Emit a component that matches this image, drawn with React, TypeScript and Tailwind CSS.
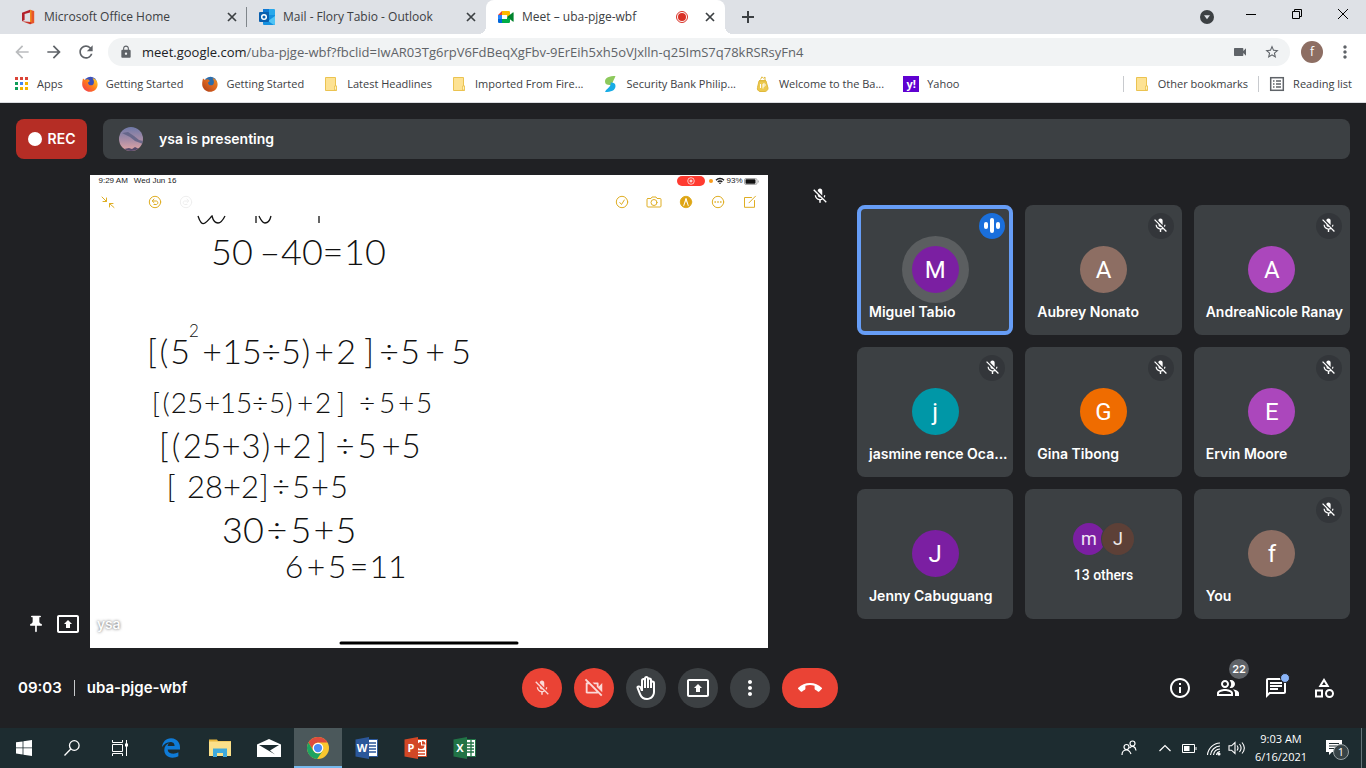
import type { ReactNode } from "react";
import {
  MdArrowBack,
  MdArrowForward,
  MdCallEnd,
  MdInfoOutline,
  MdLock,
  MdMicOff,
  MdMoreVert,
  MdOutlineBackHand,
  MdOutlineCategory,
  MdOutlineChat,
  MdOutlinePeopleAlt,
  MdOutlinePresentToAll,
  MdOutlineVideocamOff,
  MdPushPin,
  MdRefresh,
  MdStarBorder,
  MdVideocam,
} from "react-icons/md";
import { FaEdgeLegacy } from "react-icons/fa";

/* ---------- Brand icons ---------- */

function OfficeIcon() {
  return (
    <svg viewBox="0 0 16 16" className="size-4">
      <path d="M10 .8 2 3.800v8.400l2.600-1.100V5L10 3.600z" fill="#b3202a" />
      <path d="M10 .8 14.200 2v12L10 15.200z" fill="#e8562a" />
      <path d="M2 12.200 10 15.200l1.200-.4V13z" fill="#c9352b" />
      <path d="M10 .8V13l1.500.200V1.200z" fill="#f08a1d" />
    </svg>
  );
}

function OutlookIcon() {
  return (
    <svg viewBox="0 0 16 16" className="size-4">
      <path d="M4 0h11a1 1 0 0 1 1 1v6H4z" fill="#28a8ea" />
      <path d="M4 0h6v4H4z" fill="#0f78d4" />
      <path d="M4 6h12v9a1 1 0 0 1-1 1H5a1 1 0 0 1-1-1z" fill="#1490df" />
      <path d="m16 7-7 5 6 4a1 1 0 0 0 1-1z" fill="#50c4f5" />
      <rect y="3" width="10" height="10" rx="1" fill="#0a5fae" />
      <circle cx="5" cy="8" r="2.300" fill="none" stroke="#fff" strokeWidth="1.500" />
    </svg>
  );
}

function MeetIcon() {
  return (
    <svg viewBox="0 0 16 16" className="size-4">
      <path d="M0 6h4v4H0z" fill="#2684fc" />
      <path d="M0 10h4v4H1.200A1.200 1.200 0 0 1 0 12.800z" fill="#0066da" />
      <path d="m0 6 4-4v4z" fill="#e94235" />
      <path d="M4 2h6.800A1.200 1.200 0 0 1 12 3.200V7l-3 1V6H4z" fill="#ffba00" />
      <path d="M4 10h5V8l3 2v2.800a1.200 1.200 0 0 1-1.200 1.200H4z" fill="#00ac47" />
      <path d="m9 8 5.800-4.600c.4-.3.8-.1.800.4v8.400c0 .5-.4.700-.8.400z" fill="#00832d" />
      <path d="M4 6h5v4H4z" fill="#fff" />
    </svg>
  );
}

function FirefoxIcon({ dark }: { dark?: boolean }) {
  const id = dark ? "fox-dark" : "fox";
  return (
    <svg viewBox="0 0 16 16" className="size-4">
      <defs>
        <linearGradient id={id} x1="1" y1="0" x2="0" y2="1">
          <stop offset="0" stopColor={dark ? "#e8902a" : "#ffe226"} />
          <stop offset=".5" stopColor={dark ? "#d9631e" : "#ff7a1a"} />
          <stop offset="1" stopColor={dark ? "#a83a16" : "#f0315a"} />
        </linearGradient>
      </defs>
      <circle cx="8.500" cy="7" r="6.300" fill={dark ? "#2b6cab" : "#3b4fb8"} />
      <path
        d="M1 2.500 3 4c1-.8 2-1 3-.8L8 5 6 6.500c.2 2 1.400 3 3 2.800 1.500.2 2.400-.6 2.600-1.500 1-2-.2-4-1-5.800C13.500 3 16 5.500 15.600 9c-.4 4-3.600 6.800-7.600 6.800S.3 12.500.2 8.500C.1 6 .7 4 1 2.500z"
        fill={`url(#${id})`}
      />
    </svg>
  );
}

function FolderIcon() {
  return (
    <svg viewBox="0 0 16 16" className="size-4">
      <path d="M2.500 1.500h10v8.500h1v4.500h-11z" fill="#fde293" stroke="#ebc351" />
      <path d="M11.500 14v-4h2v4z" fill="#fff0bd" stroke="#ebc351" strokeWidth=".8" />
    </svg>
  );
}

function BankIcon() {
  return (
    <svg viewBox="0 0 16 16" className="size-4">
      <path d="M13.500 0C7.500 0 3 1.500 3 5.500c0 3 2.500 3.700 5.500 3.500 1.200-.1 1.500-.9 2-2.200C11 5 12.500 3 13.500 0z" fill="#8dc95c" />
      <path d="M3 16c6 0 10.500-1.500 10.500-6 0-3-2.500-3.700-5-3.500.5 1 .2 2-.5 3.500C7 12 4 13 3 16z" fill="#18ace6" />
    </svg>
  );
}

function BagIcon() {
  return (
    <svg viewBox="0 0 16 16" className="size-4" fill="none" stroke="#e0b93c">
      <path d="M5.500 3.500 7 .8l1.500 1.500L10 1v3M4 4.500h7" />
      <path d="M4 5h7l2 7c0 2-1 3-3 3.500H5c-2-.5-3-2-2.500-4z" fill="#ecc94f" />
      <path d="M5.500 8v4M8 12.500V8h1.500c1 0 1 2 0 2H8" stroke="#fff" />
    </svg>
  );
}

function AppsIcon() {
  const colors = ["#db4437", "#db4437", "#db4437", "#0f9d58", "#4285f4", "#f4b400", "#0f9d58", "#f4b400", "#f4b400"];
  return (
    <svg viewBox="0 0 16 16" className="size-4">
      {colors.map((c, i) => (
        <rect key={i} x={2 + (i % 3) * 5} y={1 + Math.floor(i / 3) * 5} width="3" height="3" fill={c} />
      ))}
    </svg>
  );
}

function ReadingIcon() {
  return (
    <svg viewBox="0 0 16 16" className="size-4" fill="none" stroke="#5f6368">
      <rect x="1.700" y="1.700" width="12.600" height="12.600" strokeWidth="1.500" />
      <path d="M4 5h1.500M4 8h1.500M4 11h1.500M7 5h5M7 8h5M7 11h5" strokeWidth="1.500" />
    </svg>
  );
}

/* ---------- Browser chrome ---------- */

function Tab({ icon, title, active, recording }: { icon: ReactNode; title: string; active?: boolean; recording?: boolean }) {
  return (
    <div
      className={
        active
          ? "relative flex w-[239px] items-center rounded-t-lg bg-white pr-[9px] pl-3 before:absolute before:bottom-0 before:-left-2 before:size-2 before:bg-[radial-gradient(circle_at_0_0,#dee1e6_8px,#fff_8px)] after:absolute after:-right-2 after:bottom-0 after:size-2 after:bg-[radial-gradient(circle_at_100%_0,#dee1e6_8px,#fff_8px)]"
          : "flex w-[239px] items-center pr-[9px] pl-3"
      }
    >
      {icon}
      <span className="ml-2 flex-1 truncate">{title}</span>
      {recording && (
        <span className="mr-4 flex size-3 items-center justify-center rounded-full border border-[#d93025]">
          <span className="size-2 rounded-full bg-[#d93025]" />
        </span>
      )}
      <button aria-label={`Close ${title}`}>
        <svg viewBox="0 0 12 12" className="size-3" stroke="#3c4043" strokeWidth="1.700">
          <path d="m2 2 8 8M10 2l-8 8" />
        </svg>
      </button>
    </div>
  );
}

function TabStrip() {
  return (
    <header className="flex h-[34px] bg-[#dee1e6] pl-2 text-xs text-[#3c4043]">
      <Tab icon={<OfficeIcon />} title="Microsoft Office Home" />
      <div className="-ml-px h-5 w-px self-center bg-[#80868b]" />
      <Tab icon={<OutlookIcon />} title="Mail - Flory Tabio - Outlook" />
      <Tab icon={<MeetIcon />} title="Meet – uba-pjge-wbf" active recording />
      <button aria-label="New tab" className="ml-[15px]">
        <svg viewBox="0 0 16 16" className="size-4" stroke="#3c4043" strokeWidth="2">
          <path d="M8 2v12M2 8h12" />
        </svg>
      </button>
      <div className="ml-auto flex items-center">
        <button aria-label="Search tabs" className="mr-[14px]">
          <svg viewBox="0 0 14 14" className="size-[14px]">
            <circle cx="7" cy="7" r="7" fill="#3c4043" />
            <path d="M4 5.300h6L7 9.300z" fill="#dee1e6" />
          </svg>
        </button>
        {[
          { name: "Minimize", d: "M1 6.500h10" },
          { name: "Restore", d: "M1.500 3.500h7v7h-7zM3.500 3V1.500h7v7H9" },
          { name: "Close", d: "m1 1 10 10M11 1 1 11" },
        ].map((b) => (
          <button key={b.name} aria-label={b.name} className="flex h-7 w-[46px] items-center justify-center self-start">
            <svg viewBox="0 0 12 12" className="size-3" fill="none" stroke="#000">
              <path d={b.d} />
            </svg>
          </button>
        ))}
      </div>
    </header>
  );
}

function Toolbar() {
  return (
    <div className="flex h-9 items-center bg-white pr-[11px]">
      <nav className="flex gap-3 pr-3 pl-3 text-[20px] text-[#5f6368]">
        <button aria-label="Back" className="text-[#babcbe]">
          <MdArrowBack />
        </button>
        <button aria-label="Forward">
          <MdArrowForward />
        </button>
        <button aria-label="Reload">
          <MdRefresh />
        </button>
      </nav>
      <div className="flex h-7 flex-1 items-center rounded-full bg-[#f1f3f4] pr-[10px] pl-[11px] text-[#5f6368]">
        <MdLock className="size-[14px]" />
        <p className="ml-[9px] flex-1 truncate text-[13px] leading-5">
          <span className="text-[#202124]">meet.google.com</span>
          /uba-pjge-wbf?fbclid=IwAR03Tg6rpV6FdBeqXgFbv-9ErEih5xh5oVJxlln-q25ImS7q78kRSRsyFn4
        </p>
        <button aria-label="Camera in use" className="mr-4">
          <MdVideocam className="size-4" />
        </button>
        <button aria-label="Bookmark this page">
          <MdStarBorder className="size-4" />
        </button>
      </div>
      <button aria-label="Profile" className="ml-[11px] size-[22px] rounded-full bg-[#8d6e63] text-xs leading-[22px] text-white">
        f
      </button>
      <button aria-label="Menu" className="ml-3">
        <MdMoreVert className="size-5 text-[#5f6368]" />
      </button>
    </div>
  );
}

function Bookmark({ icon, label }: { icon: ReactNode; label: string }) {
  return (
    <a href="#" className="flex shrink-0 items-center gap-2">
      {icon}
      <span>{label}</span>
    </a>
  );
}

function BookmarksBar() {
  return (
    <nav className="flex h-[33px] items-center gap-[19px] border-b border-[#dadce0] bg-white pr-[14px] pb-1 pl-[13px] text-[11px] leading-4 text-[#3c4043]">
      <Bookmark icon={<AppsIcon />} label="Apps" />
      <Bookmark icon={<FirefoxIcon />} label="Getting Started" />
      <Bookmark icon={<FirefoxIcon dark />} label="Getting Started" />
      <Bookmark icon={<FolderIcon />} label="Latest Headlines" />
      <Bookmark icon={<FolderIcon />} label="Imported From Fire..." />
      <Bookmark icon={<BankIcon />} label="Security Bank Philip..." />
      <Bookmark icon={<BagIcon />} label="Welcome to the Ba..." />
      <Bookmark
        icon={<span className="size-4 bg-[#5f01d1] text-center text-[11px] leading-4 font-bold text-white">y!</span>}
        label="Yahoo"
      />
      <div className="ml-auto flex items-center gap-[10px]">
        <span className="h-4 w-px bg-[#c8cace]" />
        <Bookmark icon={<FolderIcon />} label="Other bookmarks" />
        <span className="h-4 w-px bg-[#c8cace]" />
        <Bookmark icon={<ReadingIcon />} label="Reading list" />
      </div>
    </nav>
  );
}

/* ---------- Presented note ---------- */

type Mark = [string, number];
const inkRows: { y: number; size: number; marks: Mark[] }[] = [
  { y: 265, size: 36, marks: [["50", 231], ["–", 269], ["40", 301], ["=", 332], ["10", 364]] },
  {
    y: 364,
    size: 34,
    marks: [["[", 151], ["(", 163], ["5", 179], ["+", 211], ["15", 241], ["÷", 270], ["5", 290], [")", 305], ["+", 323], ["2", 345], ["]", 368], ["÷", 388], ["5", 409], ["+", 434], ["5", 460]],
  },
  {
    y: 413,
    size: 28,
    marks: [["[", 155], ["(", 165], ["25", 186], ["+", 211], ["15", 235], ["÷", 259], ["5", 276], [")", 288], ["+", 304], ["2", 322], ["]", 340], ["÷", 366], ["5", 386], ["+", 405], ["5", 423]],
  },
  {
    y: 458,
    size: 33,
    marks: [["[", 163], ["(", 175], ["25", 201], ["+", 230], ["3", 250], [")", 265], ["+", 281], ["2", 301], ["]", 321], ["÷", 344], ["5", 366], ["+", 390], ["5", 410]],
  },
  {
    y: 498,
    size: 31,
    marks: [["[", 170], ["28", 204], ["+", 231], ["2", 249], ["]", 263], ["÷", 280], ["5", 300], ["+", 319], ["5", 338]],
  },
  { y: 543, size: 36, marks: [["30", 242], ["÷", 276], ["5", 300], ["+", 323], ["5", 345]] },
  { y: 578, size: 32, marks: [["6", 293], ["+", 315], ["5", 336], ["=", 358], ["11", 387]] },
];

function NoteIcon({ name, children }: { name: string; children: ReactNode }) {
  return (
    <button aria-label={name}>
      <svg viewBox="0 0 16 16" className="size-4" fill="none" stroke="#dfae24" strokeLinecap="round" strokeLinejoin="round">
        {children}
      </svg>
    </button>
  );
}

function SharedNote() {
  return (
    <section aria-label="Shared note" className="w-full max-w-[678px] bg-white text-[#1c1c1e]">
      <div className="flex h-3 items-center pr-[9px] pl-[9px] font-['Liberation_Sans',sans-serif] text-[8px] leading-3 font-normal">
        <span>9:29 AM</span>
        <span className="ml-[6px]">Wed Jun 16</span>
        <span className="ml-auto flex h-[10px] w-7 items-center justify-center rounded-full bg-[#ff3b30]">
          <svg viewBox="0 0 8 8" className="size-2" fill="none" stroke="#fff">
            <circle cx="4" cy="4" r="3.300" strokeWidth=".7" />
            <circle cx="4" cy="4" r="1" />
          </svg>
        </span>
        <span className="ml-1 size-1 rounded-full bg-[#f79a1c]" />
        <svg viewBox="0 0 10 8" className="ml-[2px] h-2 w-[10px]" fill="none" stroke="#1c1c1e" strokeWidth="1.300">
          <path d="M1 3.200a5.600 5.600 0 0 1 8 0M2.700 5a3.200 3.200 0 0 1 4.600 0M4.300 6.500a1 1 0 0 1 1.400 0" />
        </svg>
        <span className="ml-px">93%</span>
        <svg viewBox="0 0 15 7" className="ml-px h-[7px] w-[15px]">
          <rect x=".5" y=".5" width="12.500" height="6" rx="1.500" fill="none" stroke="#aaa" />
          <rect x="1.500" y="1.300" width="10" height="4.400" rx=".8" fill="#111" />
          <path d="M14.300 2.500v2" stroke="#aaa" />
        </svg>
      </div>
      <div className="flex h-7 items-center px-[10px] pt-px">
        <NoteIcon name="Collapse">
          <path d="m2 3 4.500 4.500M6.500 4v3.500H3M14 13.500 9.500 9.500M9.500 13V9.500H13" />
        </NoteIcon>
        <div className="ml-[31px] flex gap-[15px]">
          <NoteIcon name="Undo">
            <circle cx="8" cy="8" r="5.700" />
            <path d="M5.500 7h3.800c2 0 2 3.500 0 3.500H7M7 5 5.200 7 7 8.700" />
          </NoteIcon>
          <span className="flex opacity-20 grayscale">
            <NoteIcon name="Redo">
              <circle cx="8" cy="8" r="5.700" />
              <path d="M10.500 7H6.700c-2 0-2 3.500 0 3.500H9M9 5l1.800 2L9 8.700" />
            </NoteIcon>
          </span>
        </div>
        <div className="ml-auto flex gap-4">
          <NoteIcon name="Checklist">
            <circle cx="8" cy="8" r="5.700" />
            <path d="m5.800 8.500 1.700 2L10.300 6" />
          </NoteIcon>
          <NoteIcon name="Camera">
            <path d="M2 4.500h3L6 3h4l1 1.500h3a1 1 0 0 1 1 1V12a1 1 0 0 1-1 1H2a1 1 0 0 1-1-1V5.500a1 1 0 0 1 1-1z" />
            <circle cx="8" cy="8.500" r="3" />
          </NoteIcon>
          <NoteIcon name="Markup">
            <circle cx="8" cy="8" r="5.700" fill="#dfa414" />
            <path d="m5.800 11.500 2.200-7 2.200 7M8 5v3" stroke="#fff" />
          </NoteIcon>
          <NoteIcon name="More options">
            <circle cx="8" cy="8" r="5.700" />
            <path d="M5 8h.4M7.800 8h.4M10.600 8h.4" strokeWidth="1.500" />
          </NoteIcon>
          <NoteIcon name="New note">
            <path d="M9.500 3.500H2.500v9.800h10V6.500M7 8.800 13.500 2.200" />
          </NoteIcon>
        </div>
      </div>
      <svg viewBox="89 215 678 433" className="block w-full" fill="#111">
        <path
          d="M197 216c2 6 4 9 7 7s5-5 7-7c1 4 3 7 6 7s5-3 7-7M255 216v7M258 216c2 4 3 7 6 7s5-3 6-7M318 216v7"
          fill="none"
          stroke="#111"
          strokeWidth="1.300"
        />
        <g className="font-[Lato,sans-serif] font-light" textAnchor="middle">
          {inkRows.map((row) => (
            <text key={row.y} y={row.y} fontSize={row.size}>
              {row.marks.map(([mark, x], i) => (
                <tspan key={i} x={x}>
                  {mark}
                </tspan>
              ))}
            </text>
          ))}
          <text x="193" y="337" fontSize="17">
            2
          </text>
        </g>
        <rect x="338.500" y="641.500" width="179" height="3" rx="1.500" fill="#000" />
      </svg>
    </section>
  );
}

/* ---------- Participants ---------- */

interface Person {
  name: string;
  initial: string;
  color: string;
  state: "muted" | "speaking" | "none";
}

const people: Person[] = [
  { name: "Miguel Tabio", initial: "M", color: "bg-[#7b1fa2]", state: "speaking" },
  { name: "Aubrey Nonato", initial: "A", color: "bg-[#8d6e63]", state: "muted" },
  { name: "AndreaNicole Ranay", initial: "A", color: "bg-[#ab47bc]", state: "muted" },
  { name: "jasmine rence Oca...", initial: "j", color: "bg-[#0097a7]", state: "muted" },
  { name: "Gina Tibong", initial: "G", color: "bg-[#ef6c00]", state: "muted" },
  { name: "Ervin Moore", initial: "E", color: "bg-[#ab47bc]", state: "muted" },
  { name: "Jenny Cabuguang", initial: "J", color: "bg-[#7b1fa2]", state: "none" },
];

const you: Person = { name: "You", initial: "f", color: "bg-[#8d6e63]", state: "muted" };

function Tile({ person }: { person: Person }) {
  const speaking = person.state === "speaking";
  return (
    <li className="relative flex h-[130px] items-center justify-center rounded-lg bg-[#3c4043]">
      <span className={speaking ? "flex size-[67px] items-center justify-center rounded-full bg-[#5b5e60]" : "flex"}>
        <span
          className={`${person.color} flex size-[47px] items-center justify-center rounded-full font-[Roboto,sans-serif] text-2xl font-normal text-white`}
        >
          {person.initial}
        </span>
      </span>
      <span className="absolute bottom-[13px] left-3 whitespace-nowrap">{person.name}</span>
      {person.state === "muted" && (
        <span className="absolute top-2 right-2 flex size-[26px] items-center justify-center rounded-full bg-[#33363a]">
          <MdMicOff className="size-[17px]" />
        </span>
      )}
      {speaking && (
        <>
          <span className="absolute top-2 right-2 flex size-[26px] items-center justify-center gap-[2px] rounded-full bg-[#1a6fdc]">
            <span className="h-[7px] w-1 rounded-full bg-white" />
            <span className="h-[15px] w-1 rounded-full bg-white" />
            <span className="h-[7px] w-1 rounded-full bg-white" />
          </span>
          <span className="absolute inset-0 rounded-lg border-4 border-[#669df6]" />
        </>
      )}
    </li>
  );
}

function Participants() {
  return (
    <ul className="grid w-[493px] shrink-0 grid-cols-3 gap-3 self-center">
      {people.map((p) => (
        <Tile key={p.name} person={p} />
      ))}
      <li className="flex h-[130px] flex-col items-center justify-center gap-[10px] rounded-lg bg-[#3c4043] font-[Roboto,sans-serif]">
        <span className="flex text-lg font-normal text-white/90">
          <span className="flex size-8 items-center justify-center rounded-full bg-[#7b1fa2]">m</span>
          <span className="-ml-[3px] flex size-8 items-center justify-center rounded-full bg-[#5d4037] ring-1 ring-[#3c4043]">J</span>
        </span>
        <span className="text-[14px] leading-5 font-medium">13 others</span>
      </li>
      <Tile person={you} />
    </ul>
  );
}

/* ---------- Meeting ---------- */

function RoundButton({ name, red, children }: { name: string; red?: boolean; children: ReactNode }) {
  return (
    <button
      aria-label={name}
      className={`${red ? "bg-[#ea4335] text-white/80" : "bg-[#3c4043] text-white"} flex size-10 items-center justify-center rounded-full`}
    >
      {children}
    </button>
  );
}

function SideButton({ name, badge, children }: { name: string; badge?: ReactNode; children: ReactNode }) {
  return (
    <button aria-label={name} className="relative flex h-12 w-9 items-center justify-center text-2xl">
      {children}
      {badge}
    </button>
  );
}

function Meeting() {
  return (
    <main className="flex flex-1 flex-col bg-[#202124] pt-4 font-[Inter,sans-serif] text-[14px] leading-5 font-semibold text-white">
      <div className="flex gap-4 px-4">
        <div className="flex h-10 w-[71px] items-center justify-center gap-[6px] rounded-lg bg-[#b52d25]">
          <span className="size-[14px] rounded-full bg-white" />
          REC
        </div>
        <div className="flex h-10 flex-1 items-center rounded-lg bg-[#3c4043] pl-4">
          <svg viewBox="0 0 24 24" className="size-6 rounded-full">
            <defs>
              <linearGradient id="sky" x1="0" y1="0" x2="0" y2="1">
                <stop offset="0" stopColor="#6f79a8" />
                <stop offset=".55" stopColor="#a98da6" />
                <stop offset="1" stopColor="#e3a6a4" />
              </linearGradient>
            </defs>
            <path d="M0 0h24v24H0z" fill="url(#sky)" />
            <path d="m3 6 6-1 6 4 5 4 4 1v3l-8-3-5-4z" fill="#5b5f83" opacity=".8" />
            <path d="m5 22 5-1 3 1 3-2 4 2v2H5z" fill="#54496a" />
          </svg>
          <p className="ml-4">ysa is presenting</p>
        </div>
      </div>

      <div className="flex flex-1 gap-4 px-4 pt-4">
        <div className="relative flex flex-1 items-start justify-center">
          <SharedNote />
          <MdMicOff className="absolute top-3 right-3 size-[18px]" />
          <div className="absolute bottom-3 left-[10px] flex items-center">
            <MdPushPin className="size-5" />
            <MdOutlinePresentToAll className="ml-[10px] size-6" />
            <span className="ml-[17px] font-medium text-white [text-shadow:0_0_3px_#555]">ysa</span>
          </div>
        </div>
        <Participants />
      </div>

      <footer className="grid h-20 grid-cols-[1fr_auto_1fr] items-center pr-6 pl-[18px]">
        <div className="flex items-center text-[15px]">
          <span>09:03</span>
          <span className="mx-3 h-4 w-px bg-[#c8cacc]" />
          <span>uba-pjge-wbf</span>
        </div>
        <div className="flex gap-3">
          <RoundButton name="Turn on microphone" red>
            <MdMicOff className="size-[18px]" />
          </RoundButton>
          <RoundButton name="Turn on camera" red>
            <MdOutlineVideocamOff className="size-[22px]" />
          </RoundButton>
          <RoundButton name="Raise hand">
            <MdOutlineBackHand className="size-6" />
          </RoundButton>
          <RoundButton name="Present now">
            <MdOutlinePresentToAll className="size-6" />
          </RoundButton>
          <RoundButton name="More options">
            <MdMoreVert className="size-6" />
          </RoundButton>
          <button aria-label="Leave call" className="flex h-10 w-14 items-center justify-center rounded-full bg-[#ea4335]">
            <MdCallEnd className="size-6" />
          </button>
        </div>
        <div className="flex justify-end gap-3">
          <SideButton name="Meeting details">
            <MdInfoOutline />
          </SideButton>
          <SideButton
            name="Show everyone"
            badge={
              <span className="absolute -top-[5px] left-[19px] size-5 rounded-full bg-[#5f6368] text-center text-[11px] leading-5">22</span>
            }
          >
            <MdOutlinePeopleAlt />
          </SideButton>
          <SideButton
            name="Chat with everyone"
            badge={<span className="absolute top-[9px] left-[22px] size-[10px] rounded-full border border-[#202124] bg-[#8ab4f8]" />}
          >
            <MdOutlineChat />
          </SideButton>
          <SideButton name="Activities">
            <MdOutlineCategory />
          </SideButton>
        </div>
      </footer>
    </main>
  );
}

/* ---------- Taskbar ---------- */

function TaskButton({ name, active, children }: { name: string; active?: boolean; children: ReactNode }) {
  return (
    <button
      aria-label={name}
      className={
        active
          ? "flex h-10 w-12 items-center justify-center border-b-2 border-[#76b9ed] bg-[#4b585b]"
          : "flex h-10 w-12 items-center justify-center"
      }
    >
      {children}
    </button>
  );
}

function OfficeApp({ letter, color, children }: { letter: string; color: string; children: ReactNode }) {
  return (
    <svg viewBox="0 0 24 24" className="size-6">
      <path d="M12 3.500h10.500v17H12z" fill="#fff" stroke={color} />
      {children}
      <path d="M.5 3.500 14 1v22L.5 20.500z" fill={color} />
      <text x="7" y="16" textAnchor="middle" fontSize="11" fontWeight="700" fill="#fff">
        {letter}
      </text>
    </svg>
  );
}

function Taskbar() {
  return (
    <footer className="flex h-10 items-center bg-[#1d2c30] text-white">
      <TaskButton name="Start">
        <svg viewBox="0 0 16 16" className="size-4" fill="#fff">
          <path d="M0 2.300 6.600 1.400v6.100H0zM7.400 1.300 16 0v7.500H7.400zM0 8.300h6.600v6.200L0 13.600zM7.400 8.300H16V16l-8.600-1.300z" />
        </svg>
      </TaskButton>
      <TaskButton name="Search">
        <svg viewBox="0 0 16 16" className="size-4" fill="none" stroke="#fff" strokeWidth="1.300">
          <circle cx="10.300" cy="5.500" r="4.800" />
          <path d="M6.800 9 .5 15.500" />
        </svg>
      </TaskButton>
      <TaskButton name="Task view">
        <svg viewBox="0 0 16 16" className="size-4" fill="none" stroke="#fff">
          <path d="M.5 0v2.500h10V0M.5 16v-2.500h10V16M.5 4.500h10v7H.5zM14.500 0v16" />
          <path d="M13 3.500h3v3h-3z" fill="#fff" stroke="none" />
        </svg>
      </TaskButton>
      <div className="ml-[3px] flex gap-px">
        <TaskButton name="Edge">
          <FaEdgeLegacy className="size-5 text-[#0f7bd7]" />
        </TaskButton>
        <TaskButton name="File Explorer">
          <svg viewBox="0 0 22 20" className="h-5 w-[22px]">
            <path d="M0 1.500h8l1 1.500h13v3H0z" fill="#e8b63c" />
            <path d="M0 3.500h22V18H0z" fill="#fbe08a" />
            <path d="M4 19v-8.500h14V19h-4v-4H8v4z" fill="#3fa9dc" />
          </svg>
        </TaskButton>
        <TaskButton name="Mail">
          <svg viewBox="0 0 24 20" className="h-5 w-6">
            <path d="M0 6.500 12 1l12 5.500V19H0z" fill="#fff" />
            <path d="M2 7h20l-9 5.500 5 4z" fill="#1d2c30" />
          </svg>
        </TaskButton>
        <TaskButton name="Chrome" active>
          <svg viewBox="0 0 24 24" className="mt-[2px] size-[22px]">
            <circle cx="12" cy="12" r="12" fill="#fbc72e" />
            <path d="M1.600 6a12 12 0 0 1 20.800 0H12a6 6 0 0 0-5.200 9z" fill="#dd4b3e" />
            <path d="M1.600 6A12 12 0 0 0 11 24l6.200-9A6 6 0 0 1 6.800 15z" fill="#1ea361" />
            <circle cx="12" cy="12" r="5.800" fill="#fff" />
            <circle cx="12" cy="12" r="4.500" fill="#4c8bf5" />
          </svg>
        </TaskButton>
        <TaskButton name="Word">
          <OfficeApp letter="W" color="#2b579a">
            <path d="M14 7h7M14 10h7M14 13h7M14 16h7" stroke="#2b579a" strokeWidth="1.500" />
          </OfficeApp>
        </TaskButton>
        <TaskButton name="PowerPoint">
          <OfficeApp letter="P" color="#d24726">
            <path d="M14 15h7M14 18h7" stroke="#d24726" strokeWidth="1.500" />
            <path d="M17 6a3.500 3.500 0 1 0 3.500 3.500H17zM18 5v3.500h3.500A3.500 3.500 0 0 0 18 5z" fill="#d24726" />
          </OfficeApp>
        </TaskButton>
        <TaskButton name="Excel">
          <OfficeApp letter="X" color="#217346">
            <path d="M14 7h7M14 10h7M14 13h7M14 16h7M18 4v16" stroke="#217346" strokeWidth="1.300" />
          </OfficeApp>
        </TaskButton>
      </div>

      <div className="ml-auto flex h-full items-center">
        <button aria-label="People">
          <svg viewBox="0 0 16 16" className="size-4" fill="none" stroke="#fff" strokeWidth="1.200">
            <circle cx="5.500" cy="7" r="2.500" />
            <path d="M1 15c0-3.500 2-5 4.500-5s3.500 1.500 4.500 4" />
            <circle cx="11.500" cy="3.500" r="2.500" />
            <path d="M8.500 8c3-3 6-1.500 6.500 2.500" />
          </svg>
        </button>
        <button aria-label="Show hidden icons" className="ml-[21px]">
          <svg viewBox="0 0 14 14" className="size-[14px]" fill="none" stroke="#fff" strokeWidth="1.200">
            <path d="m1.500 10 5.500-5.500 5.500 5.500" />
          </svg>
        </button>
        <svg viewBox="0 0 16 16" className="ml-[9px] size-4" fill="none" stroke="#fff">
          <path d="M1.500 4.500h12v8h-12zM15 7v3" />
          <path d="M3 6h5.500v5H3z" fill="#fff" stroke="none" />
        </svg>
        <svg viewBox="0 0 16 16" className="ml-[9px] size-4" fill="none" stroke="#fff" strokeWidth="1.100">
          <path d="M1.500 15A13 13 0 0 1 14 3M4.500 15a10 10 0 0 1 9.500-9M7.500 15A7 7 0 0 1 14 9M10.500 15a4 4 0 0 1 3.500-3.500" />
          <circle cx="13" cy="14" r="1" fill="#fff" />
        </svg>
        <svg viewBox="0 0 18 16" className="ml-[6px] h-4 w-[18px]" fill="none" stroke="#fff" strokeWidth="1.100">
          <path d="M1 5.800h2.500L7 2.500v11l-3.500-3.300H1zM9 5.500c1.200 1.500 1.200 3.500 0 5M11.500 4c2 2.500 2 5.500 0 8M14 2.500c3 3.500 3 7.500 0 11" />
        </svg>
        <div className="ml-2 w-[54px] text-center text-[11px] leading-[18px] whitespace-nowrap">
          <p>9:03 AM</p>
          <p>6/16/2021</p>
        </div>
        <button aria-label="Notifications" className="relative ml-[17px] size-6">
          <svg viewBox="0 0 24 24" className="size-6">
            <path d="M1 4h16v12H7l-3 3v-3H1z" fill="#fff" />
            <path d="M4 7.500h10M4 10h10M4 12.500h6" stroke="#1d2c30" />
          </svg>
          <span className="absolute top-2 left-2 size-4 rounded-full border border-[#9aa3a5] bg-[#374346] text-center text-[11px] leading-[14px]">
            1
          </span>
        </button>
        <span className="mr-1 ml-3 h-full w-px bg-[#65757a]" />
      </div>
    </footer>
  );
}

export default function App() {
  return (
    <div className="flex min-h-screen flex-col font-['Open_Sans',sans-serif]">
      <TabStrip />
      <Toolbar />
      <BookmarksBar />
      <Meeting />
      <Taskbar />
    </div>
  );
}
